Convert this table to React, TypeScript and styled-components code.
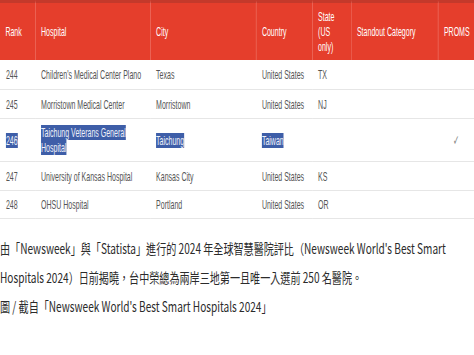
import { styled, createGlobalStyle } from 'styled-components';

// Page reset: no margin, white page, nothing scrolls
const GlobalStyle = createGlobalStyle`
    html, body {
        margin: 0;
        padding: 0;
        background: #ffffff;
        overflow: hidden;
    }
`;

const PAGE_WIDTH = 474;

// The screenshot is a squeezed capture, so each block is laid out wide and scaled down
const Squeeze = styled.div<{ $factor: number }>`
    width: ${p => PAGE_WIDTH / p.$factor}px;
    transform: scaleX(${p => p.$factor});
    transform-origin: left top;
`;

const Table = styled.table`
    width: 100%;
    table-layout: fixed;
    border-collapse: separate;
    border-spacing: 0;
    font-family: "Liberation Sans", Arial, sans-serif;
    font-size: 13px;
    line-height: 15px;
`;

const HeadCell = styled.th`
    height: 57px;
    padding: 0 10px;
    background: #e53e2c;
    border-top: 3px solid #c4392b;
    border-left: 1px solid #ee7265;
    color: #ffffff;
    font-weight: normal;
    text-align: left;
    vertical-align: middle;

    &:first-child {
        border-left: none;
    }
`;

const Cell = styled.td<{ $h: number; $center?: boolean }>`
    height: ${p => p.$h}px;
    padding: 0 11px;
    border-bottom: 1px solid #e6e6e6;
    color: #555555;
    text-align: ${p => (p.$center ? 'center' : 'left')};
    vertical-align: middle;
`;

// Text that was selected in the original page
const Selected = styled.span`
    background: #3e5ea8;
    color: #eef1fa;
`;

const Check = styled.span`
    color: #888888;
    font-size: 14px;
`;

const Caption = styled.div`
    margin-top: 15px;
    font-family: "Noto Sans CJK TC", "Noto Sans", sans-serif;
    font-size: 14px;
    color: #2b2b2b;
`;

const CaptionLine = styled.div`
    height: 29px;
    line-height: 29px;
    white-space: nowrap;
`;

type Row = {
    rank: string;
    hospital: string;
    city: string;
    country: string;
    state: string;
};

const rows: Row[] = [
    { rank: '244', hospital: "Children's Medical Center Plano", city: 'Texas', country: 'United States', state: 'TX' },
    { rank: '245', hospital: 'Morristown Medical Center', city: 'Morristown', country: 'United States', state: 'NJ' },
    { rank: '247', hospital: 'University of Kansas Hospital', city: 'Kansas City', country: 'United States', state: 'KS' },
    { rank: '248', hospital: 'OHSU Hospital', city: 'Portland', country: 'United States', state: 'OR' },
];

const columns = [65, 213, 196, 104, 72, 161, 67];

function PlainRow({ row, h }: { row: Row; h: number }) {
    return (
        <tr>
            <Cell $h={h}>{row.rank}</Cell>
            <Cell $h={h}>{row.hospital}</Cell>
            <Cell $h={h}>{row.city}</Cell>
            <Cell $h={h}>{row.country}</Cell>
            <Cell $h={h}>{row.state}</Cell>
            <Cell $h={h} />
            <Cell $h={h} />
        </tr>
    );
}

export default function App() {
    return (
        <>
            <GlobalStyle />
            <Squeeze $factor={0.54}>
                <Table>
                    <colgroup>
                        {columns.map((w, i) => <col key={i} style={{ width: w }} />)}
                    </colgroup>
                    <thead>
                        <tr>
                            <HeadCell>Rank</HeadCell>
                            <HeadCell>Hospital</HeadCell>
                            <HeadCell>City</HeadCell>
                            <HeadCell>Country</HeadCell>
                            <HeadCell>State (US only)</HeadCell>
                            <HeadCell>Standout Category</HeadCell>
                            <HeadCell>PROMS</HeadCell>
                        </tr>
                    </thead>
                    <tbody>
                        <PlainRow row={rows[0]} h={29} />
                        <PlainRow row={rows[1]} h={28} />
                        {/* Taichung Veterans General Hospital, the highlighted entry */}
                        <tr>
                            <Cell $h={42}><Selected>246</Selected></Cell>
                            <Cell $h={42}><Selected>Taichung Veterans General Hospital</Selected></Cell>
                            <Cell $h={42}><Selected>Taichung</Selected></Cell>
                            <Cell $h={42}><Selected>Taiwan</Selected></Cell>
                            <Cell $h={42} />
                            <Cell $h={42} />
                            <Cell $h={42} $center><Check>✓</Check></Cell>
                        </tr>
                        <PlainRow row={rows[2]} h={28} />
                        <PlainRow row={rows[3]} h={27} />
                    </tbody>
                </Table>
            </Squeeze>
            <Squeeze $factor={0.72}>
                <Caption>
                    <CaptionLine>由「Newsweek」與「Statista」進行的 2024 年全球智慧醫院評比（Newsweek World's Best Smart</CaptionLine>
                    <CaptionLine>Hospitals 2024）日前揭曉，台中榮總為兩岸三地第一且唯一入選前 250 名醫院。</CaptionLine>
                    <CaptionLine>圖 / 截自「Newsweek World's Best Smart Hospitals 2024」</CaptionLine>
                </Caption>
            </Squeeze>
        </>
    );
}
